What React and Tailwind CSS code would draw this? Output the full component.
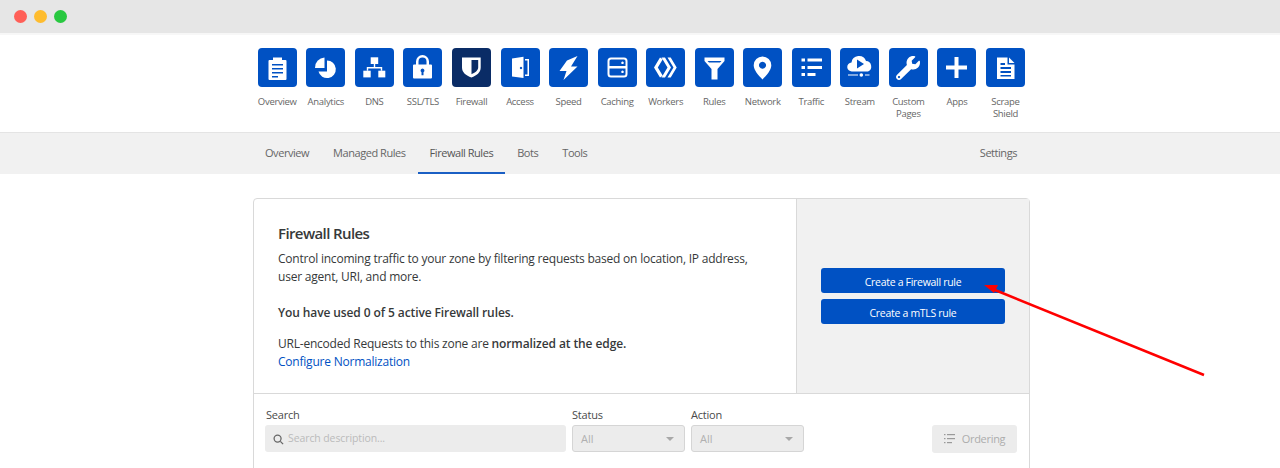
import { FaWrench } from "react-icons/fa";

const navItems = [
  { label: "Overview", icon: <OverviewIcon /> },
  { label: "Analytics", icon: <AnalyticsIcon /> },
  { label: "DNS", icon: <DnsIcon /> },
  { label: "SSL/TLS", icon: <LockIcon /> },
  { label: "Firewall", icon: <ShieldIcon />, active: true },
  { label: "Access", icon: <DoorIcon /> },
  { label: "Speed", icon: <BoltIcon /> },
  { label: "Caching", icon: <ServerIcon /> },
  { label: "Workers", icon: <WorkersIcon /> },
  { label: "Rules", icon: <FunnelIcon /> },
  { label: "Network", icon: <PinIcon /> },
  { label: "Traffic", icon: <ListIcon /> },
  { label: "Stream", icon: <StreamIcon /> },
  { label: "Custom Pages", icon: <FaWrench size={24} color="white" /> },
  { label: "Apps", icon: <PlusIcon /> },
  { label: "Scrape Shield", icon: <DocIcon /> },
];

function Svg({ children }) {
  return (
    <svg width="39" height="39" viewBox="0 0 39 39" fill="white">
      {children}
    </svg>
  );
}

function OverviewIcon() {
  return (
    <Svg>
      <path fillRule="evenodd" d="M11.500 12h3.500v-2.500h9v2.500h3.500a1 1 0 0 1 1 1v18a1 1 0 0 1-1 1h-16a1 1 0 0 1-1-1v-18a1 1 0 0 1 1-1zM14 16v1.500h11v-1.500zM14 20v1.500h11v-1.500zM14 24v1.500h11v-1.500zM14 28v1.500h6v-1.500z" />
    </Svg>
  );
}

function AnalyticsIcon() {
  return (
    <Svg>
      <path d="M21 12.500a8.800 8.800 0 1 1-8.500 11h8.500z" />
      <path d="M18.500 9.500v10.500h-9.500a10 10 0 0 1 9.500-10.500z" />
    </Svg>
  );
}

function DnsIcon() {
  return (
    <Svg>
      <rect x="15.700" y="9.300" width="7.500" height="6.700" />
      <rect x="8.300" y="22.700" width="7.400" height="6.700" />
      <rect x="23.300" y="22.700" width="7" height="6.700" />
      <path d="M18.800 16h1.400v3h7v3.700h-1.400v-2.300h-12.600v2.300h-1.400v-3.700h7z" />
    </Svg>
  );
}

function LockIcon() {
  return (
    <Svg>
      <path fillRule="evenodd" d="M13 16.500v-3a6.500 6.500 0 0 1 13 0v3h2a1 1 0 0 1 1 1v12a1 1 0 0 1-1 1h-17a1 1 0 0 1-1-1v-12a1 1 0 0 1 1-1zM15.500 16.500h8v-3a4 4 0 0 0-8 0zM19.500 20.500a2 2 0 0 0-1 3.700v3h2v-3a2 2 0 0 0-1-3.700z" />
    </Svg>
  );
}

function ShieldIcon() {
  return (
    <Svg>
      <path fillRule="evenodd" d="M10 9.500h18.700v10c0 5-4 8-9.300 10c-5.300-2-9.400-5-9.400-10zM19.500 12v14.200c3.500-1.500 6.700-3.700 6.700-6.700v-7.500z" />
    </Svg>
  );
}

function DoorIcon() {
  return (
    <Svg>
      <path fillRule="evenodd" d="M11 10.500l11.500-1.800v21.300l-11.500-1.500zM20 18.800a1.200 1.200 0 1 0 0.010 0z" />
      <path d="M24 11h4v17h-4v-1.500h2.500v-14h-2.500z" />
    </Svg>
  );
}

function BoltIcon() {
  return (
    <Svg>
      <path d="M28.500 8l-10.500 4.500l-7.500 10.500h7l-3 9l14-13.500h-6.500z" />
    </Svg>
  );
}

function ServerIcon() {
  return (
    <Svg>
      <path fillRule="evenodd" d="M13 9.500h13a3.500 3.500 0 0 1 3.500 3.500v13a3.500 3.500 0 0 1-3.500 3.500h-13a3.500 3.500 0 0 1-3.500-3.500v-13a3.500 3.500 0 0 1 3.500-3.500zM11.500 18h16v-5a1.500 1.500 0 0 0-1.500-1.500h-13a1.500 1.500 0 0 0-1.500 1.500zM11.500 20.500v5.500a1.500 1.500 0 0 0 1.500 1.500h13a1.500 1.500 0 0 0 1.500-1.500v-5.500zM24.500 13.500a1.300 1.300 0 1 0 0.010 0zM24.500 22.500a1.300 1.300 0 1 0 0.010 0z" />
    </Svg>
  );
}

function WorkersIcon() {
  return (
    <Svg>
      <path d="M14 9.500l2.800 1.800l-5 8.200l5 8.200l-2.800 1.800l-6-10z" />
      <path d="M15.500 9.500h3.500l6 10l-6 10h-3.500l6-10z" />
      <path d="M21.500 9.500h3.200l6 10l-6 10h-3.200l6-10z" />
    </Svg>
  );
}

function FunnelIcon() {
  return (
    <Svg>
      <path fillRule="evenodd" d="M9.500 9.500h20v3.500l-7 8v10.500h-6v-10.500l-7-8zM12.500 13l1.500 1.500h11l1.500-1.500z" />
    </Svg>
  );
}

function PinIcon() {
  return (
    <Svg>
      <path fillRule="evenodd" d="M19.500 8.500a8.800 8.800 0 0 1 8.800 8.800c0 5-4.800 10-8.800 14.200c-4-4.200-8.800-9.200-8.800-14.200a8.800 8.800 0 0 1 8.800-8.800zM19.500 13.800a3.500 3.500 0 1 0 0.010 0z" />
    </Svg>
  );
}

function ListIcon() {
  return (
    <Svg>
      <rect x="9.500" y="10.500" width="3.500" height="3" />
      <rect x="15.500" y="10.500" width="14.500" height="3" />
      <rect x="9.500" y="18" width="3.500" height="3" />
      <rect x="15.500" y="18" width="14.500" height="3" />
      <rect x="9.500" y="25" width="3.500" height="3" />
      <rect x="15.500" y="25" width="8" height="3" />
    </Svg>
  );
}

function StreamIcon() {
  return (
    <Svg>
      <path fillRule="evenodd" d="M12 23.500a4.500 4.500 0 0 1-0.500-9a7.500 7.500 0 0 1 14.500-1.500a5.500 5.500 0 0 1 2 10.500zM17 11.500v9l7-4.500z" />
      <rect x="8" y="26.500" width="10" height="1" />
      <circle cx="21.300" cy="27" r="1.800" />
      <rect x="25" y="26.500" width="4.500" height="1" />
    </Svg>
  );
}

function PlusIcon() {
  return (
    <Svg>
      <rect x="9" y="17.500" width="21" height="4" />
      <rect x="17.500" y="9" width="4" height="21" />
    </Svg>
  );
}

function DocIcon() {
  return (
    <Svg>
      <path fillRule="evenodd" d="M11 9.500h10.500v7h7v14.500h-17.500zM14.500 19v2h10.500v-2zM14.500 23v2h10.500v-2zM14.500 27v1.500h10.500v-1.500zM14.500 15v2h4.500v-2z" />
      <path d="M23 9.500l5.500 5.500h-5.500z" />
    </Svg>
  );
}

function Select({ label }) {
  return (
    <div className="ml-[6px] w-[113px]">
      <div className="h-[21px] text-[11px] leading-[21px] tracking-[-0.2px] text-[#4a4a4a]">{label}</div>
      <div className="flex h-[27px] items-center justify-between rounded-[3px] border border-[#d5d5d5] bg-[#ececec] pl-2 pr-[10px] pt-[1px] text-[11px] text-[#b0b0b0]">
        All
        <span className="h-0 w-0 border-x-[4px] border-t-[4px] border-x-transparent border-t-[#a8a8a8]" />
      </div>
    </div>
  );
}

export default function App() {
  return (
    <div className="relative h-[468px] overflow-hidden bg-white font-['Open_Sans',sans-serif] text-[#36393a]">
      <div className="flex h-[33px] items-center gap-[7px] bg-[#e6e6e6] pl-[13.5px]">
        <span className="h-[13px] w-[13px] rounded-full bg-[#ff5f57]" />
        <span className="h-[13px] w-[13px] rounded-full bg-[#febc2e]" />
        <span className="h-[13px] w-[13px] rounded-full bg-[#28c840]" />
      </div>
      <div className="h-[2px] bg-[#f7f7f7]" />

      <nav className="ml-[253px] flex h-[97px] w-[778px] pt-[13px]">
        {navItems.map((item) => (
          <div key={item.label} className="flex w-[48.56px] flex-col items-center">
            <div className={`flex h-[39px] w-[39px] items-center justify-center rounded-[4px] ${item.active ? "bg-[#0a2c66]" : "bg-[#0051c3]"}`}>
              {item.icon}
            </div>
            <div className="mt-[9px] w-[46px] text-center text-[9.5px] leading-[12px] tracking-[-0.3px] text-[#666]">{item.label}</div>
          </div>
        ))}
      </nav>

      <div className="h-[42px] border-t border-[#e4e4e4] bg-[#f1f1f1]">
        <div className="ml-[253px] flex h-[41px] w-[776px] items-center text-[11px] tracking-[-0.45px] text-[#666]">
          <span className="px-3">Overview</span>
          <span className="px-3">Managed Rules</span>
          <span className="flex h-full items-center border-y-2 border-t-transparent border-b-[#1a5fc4] px-3 text-[#555]">Firewall Rules</span>
          <span className="px-3">Bots</span>
          <span className="px-3">Tools</span>
          <span className="ml-auto px-3">Settings</span>
        </div>
      </div>

      <div className="ml-[253px] mt-[24px] w-[777px] rounded-t-[4px] border border-[#d9d9d9]">
        <div className="flex h-[195px] border-b border-[#d9d9d9]">
          <div className="w-[542px] pl-[24px] pt-[24px] text-[12px] leading-[18px] tracking-[-0.22px]">
            <h2 className="text-[15px] font-semibold leading-[20px] tracking-[-0.6px]">Firewall Rules</h2>
            <p className="mt-[7px] w-[480px]">
              Control incoming traffic to your zone by filtering requests based on location, IP address, user agent, URI, and more.
            </p>
            <p className="mt-[18px] font-semibold tracking-[-0.1px]">You have used 0 of 5 active Firewall rules.</p>
            <p className="mt-[13px]">
              URL-encoded Requests to this zone are <b className="font-semibold tracking-[-0.1px]">normalized at the edge.</b>
            </p>
            <a className="block text-[#0051c3]">Configure Normalization</a>
          </div>
          <div className="flex flex-1 flex-col gap-[6px] border-l border-[#d9d9d9] bg-[#f1f1f1] pl-[24px] pr-[24px] pt-[69px] text-[10.5px] tracking-[-0.3px] text-white">
            <button className="h-[25px] rounded-[3px] bg-[#0051c3] pt-[4px]">Create a Firewall rule</button>
            <button className="h-[25px] rounded-[3px] bg-[#0051c3] pt-[4px]">Create a mTLS rule</button>
          </div>
        </div>
        <div className="flex h-[90px] pl-[11px] pr-[12px] pt-[10px]">
          <div className="w-[301px]">
            <div className="h-[21px] pl-[1px] text-[11px] leading-[21px] tracking-[-0.2px] text-[#4a4a4a]">Search</div>
            <div className="flex h-[27px] items-center gap-[4px] rounded-[3px] bg-[#ececec] pl-2 pt-[1px] text-[10.5px] tracking-[-0.1px] text-[#bbb]">
              <svg width="11" height="11" viewBox="0 0 12 12" fill="none" stroke="#666" strokeWidth="1.4">
                <circle cx="5" cy="5" r="3.800" />
                <path d="M8 8l3 3" />
              </svg>
              Search description...
            </div>
          </div>
          <Select label="Status" />
          <Select label="Action" />
          <button className="ml-auto mt-[21px] flex h-[28px] w-[85px] items-center justify-center gap-[7px] rounded-[3px] bg-[#ececec] text-[11px] tracking-[-0.3px] text-[#adadad]">
            <svg width="11" height="10" viewBox="0 0 11 10" fill="#9a9a9a">
              <rect x="0" y="0" width="1.500" height="1.200" />
              <rect x="3" y="0" width="8" height="1.200" />
              <rect x="0" y="4" width="1.500" height="1.200" />
              <rect x="3" y="4" width="8" height="1.200" />
              <rect x="0" y="8" width="1.500" height="1.200" />
              <rect x="3" y="8" width="5" height="1.200" />
            </svg>
            Ordering
          </button>
        </div>
      </div>

      <svg className="absolute left-0 top-0" width="1280" height="468" fill="none">
        <path d="M1204 375L995 290" stroke="#ff0000" strokeWidth="2.5" />
        <path d="M984 285l14 0l-4 8z" fill="#ff0000" />
      </svg>
    </div>
  );
}
